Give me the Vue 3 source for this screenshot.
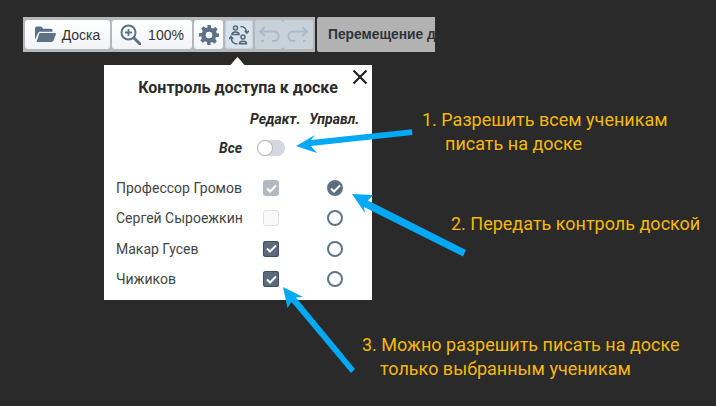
<script setup>
const rows = [
  { name: 'Профессор Громов', edit: 'disabled', owner: true },
  { name: 'Сергей Сыроежкин', edit: 'off', owner: false },
  { name: 'Макар Гусев', edit: 'on', owner: false },
  { name: 'Чижиков', edit: 'on', owner: false },
]
const arrows = [
  'M412 129.300 L311 140 L315 135 L296 146 L317 153 L311 146 L412.500 135 Z',
  'M352 194 L373 195 L368 200.500 L466 250 L463 256.500 L364 207 L365 213 Z',
  'M283 287 L303 297 L296 297.500 L355 369 L351 373 L291.500 302 L287.500 308 Z',
]
</script>

<template>
  <div class="stage">
    <div class="topbar">
      <div class="toolbar">
        <button class="btn board">
          <svg width="21" height="17" viewBox="0 0 21 17"><path fill="#5d7286" d="M0 2.500C0 1.400.8.500 1.800.500h4.400l2 2.200h7.500c1 0 1.800.8 1.800 1.800v1.200H5.200c-1 0-1.800.6-2.200 1.500L0 13.500z"/><path fill="#5d7286" d="M4.500 7h15.200c.9 0 1.400.8 1.100 1.500l-2.400 6.300c-.3.700-.9 1.200-1.700 1.200H1.500z"/></svg>
          <span>Доска</span>
        </button>
        <button class="btn zoom">
          <svg width="21" height="21" viewBox="0 0 21 21" fill="none" stroke="#5d7286"><circle cx="8.500" cy="8.500" r="7" stroke-width="2"/><path d="M14 14l6 6" stroke-width="3" stroke-linecap="round"/><path d="M8.500 5v7M5 8.500h7" stroke-width="1.800"/></svg>
          <span>100%</span>
        </button>
        <button class="btn icon">
          <svg width="20" height="20" viewBox="0 0 24 24"><path fill="#5d7286" fill-rule="evenodd" d="M10 0h4l.6 3.300 2.200.9 2.800-1.900 2.800 2.800-1.900 2.800.9 2.200L24 10v4l-3.600.6-.9 2.200 1.900 2.800-2.800 2.800-2.800-1.900-2.200.9L14 24h-4l-.6-3.600-2.200-.9-2.800 1.900-2.800-2.800 1.900-2.800-.9-2.200L0 14v-4l3.600-.6.900-2.200-1.900-2.800 2.800-2.800 2.800 1.900 2.200-.9zM12 8a4 4 0 1 0 0 8 4 4 0 0 0 0-8z"/></svg>
        </button>
        <button class="btn icon active">
          <svg width="20" height="20" viewBox="0 0 20 20" fill="none" stroke="#51677b" stroke-width="1.500">
            <circle cx="6.500" cy="3" r="2"/>
            <path d="M3 9.500c0-3.200 7-3.200 7 0z"/>
            <circle cx="14" cy="12" r="2"/>
            <path d="M10.500 18.700c0-3.200 7-3.200 7 0z"/>
            <path d="M11.500 1.500c3.600 0 5.800 2 6.300 6M15.700 5.800l2.100 2.400 2-2.500M8.500 19c-3.600 0-6-2.300-6.500-6.500M0 14l2-2.500 2.200 2.500"/>
          </svg>
        </button>
        <button class="btn icon dim">
          <svg width="22" height="17" viewBox="0 0 22 17" fill="none" stroke="#a9bac8" stroke-width="2"><path d="M7 1L2 5.500 7 10M2 5.500h14c6 0 6 9.500 0 9.500h-2M3 15h3" /></svg>
        </button>
        <button class="btn icon dim">
          <svg width="22" height="17" viewBox="0 0 22 17" fill="none" stroke="#a9bac8" stroke-width="2"><path d="M15 1l5 4.500L15 10M20 5.500H6c-6 0-6 9.500 0 9.500h2M16 15h3"/></svg>
        </button>
      </div>
      <div class="mode"><span>Перемещение доски</span></div>
    </div>

    <div class="popup">
      <button class="close">
        <svg width="16" height="16" viewBox="0 0 16 16" stroke="#222" stroke-width="2.200"><path d="M1.500 1.500l13 13M14.500 1.500l-13 13"/></svg>
      </button>
      <h3>Контроль доступа к доске</h3>
      <div class="heads"><i>Редакт.</i><i>Управл.</i></div>
      <div class="all">
        <i>Все</i>
        <span class="switch"><span class="knob"></span></span>
      </div>
      <ul class="list">
        <li v-for="r in rows" :key="r.name">
          <span class="name">{{ r.name }}</span>
          <span class="check" :class="r.edit">
            <svg v-if="r.edit !== 'off'" width="11" height="9" viewBox="0 0 11 9" fill="none" stroke="#fff" stroke-width="2"><path d="M1 4.500l3 3 6-6"/></svg>
          </span>
          <span class="radio" :class="{ on: r.owner }">
            <svg v-if="r.owner" width="11" height="9" viewBox="0 0 11 9" fill="none" stroke="#fff" stroke-width="2"><path d="M1 4.500l3 3 6-6"/></svg>
          </span>
        </li>
      </ul>
    </div>

    <svg class="arrows" width="716" height="406" viewBox="0 0 716 406">
      <path v-for="a in arrows" :key="a" :d="a" fill="#03a9f4"/>
    </svg>

    <p class="note n1">1. Разрешить всем ученикам<br><span>писать на доске</span></p>
    <p class="note n2">2. Передать контроль доской</p>
    <p class="note n3">3. Можно разрешить писать на доске<br><span>только выбранным ученикам</span></p>
  </div>
</template>

<style>
html, body { margin: 0; background: #2a2a2a; }
</style>

<style scoped>
.stage {
  position: relative;
  width: 716px;
  height: 406px;
  overflow: hidden;
  background: #2a2a2a;
  font-family: Roboto, sans-serif;
  padding: 17px 0 0 23px;
  box-sizing: border-box;
}
.topbar { display: flex; gap: 2px; width: 412px; }
.toolbar {
  display: flex;
  gap: 2px;
  padding: 3px 2px;
  background: #b5b7b9;
  height: 35px;
  box-sizing: border-box;
}
.btn {
  height: 29px;
  border: 0;
  padding: 0;
  border-radius: 3px;
  background: linear-gradient(#ffffff, #f1f4f7);
  display: flex;
  align-items: center;
  justify-content: center;
  font: 14px "Liberation Sans", sans-serif;
  color: #333;
}
.board { width: 85px; gap: 6px; }
.zoom { width: 80px; gap: 7px; }
.icon { width: 29px; }
.active { background: #d8e3ec; width: 28px; box-shadow: inset 0 0 0 1px #c4d0da; }
.dim { background: #c9d1d8; width: 28px; }
.dim + .dim { margin-left: -2px; width: 30px; }
.mode {
  flex: 1;
  min-width: 0;
  overflow: hidden;
  white-space: nowrap;
  background: #b2b2b2;
  border-radius: 2px 0 0 2px;
  height: 35px;
  padding-left: 11px;
  font: bold 13.800px/35px "Liberation Sans", sans-serif;
  color: #2f3438;
}
.popup {
  position: absolute;
  left: 104px;
  top: 65px;
  width: 268px;
  height: 235px;
  background: #fff;
  color: #3c3c3c;
}
.popup::before {
  content: "";
  position: absolute;
  left: 121px;
  top: -8px;
  width: 25px;
  height: 9px;
  background: #fff;
  clip-path: path("M0 9C5 9 6 8 8 5L12.500 0 17 5C19 8 20 9 25 9Z");
}
.close {
  position: absolute;
  top: 4px;
  right: 4px;
  border: 0;
  padding: 0;
  background: none;
  display: flex;
}
h3 {
  margin: 0;
  padding-top: 13px;
  text-align: center;
  font-size: 16px;
  line-height: 19px;
  font-weight: 700;
  color: #2c2c2c;
}
.heads {
  display: flex;
  gap: 9px;
  margin-top: 14px;
  padding-left: 146px;
  font-size: 14px;
  font-weight: 700;
  line-height: 16px;
  color: #2c2c2c;
}
.all {
  display: flex;
  align-items: center;
  gap: 15px;
  margin-top: 13px;
  padding-left: 115px;
  font-size: 14px;
  font-weight: 700;
  line-height: 16px;
  color: #2c2c2c;
}
.switch {
  width: 28px;
  height: 16px;
  border-radius: 8px;
  background: #d3d8de;
  position: relative;
}
.knob {
  position: absolute;
  left: 0;
  top: 0;
  width: 14px;
  height: 14px;
  border: 1px solid #b0b4b8;
  border-radius: 50%;
  background: #fff;
}
.list { list-style: none; margin: 17px 0 0; padding: 0 0 0 12px; }
li {
  height: 30.300px;
  display: flex;
  align-items: center;
  font-size: 14px;
  color: #444;
}
.name { width: 147px; white-space: nowrap; }
.check {
  width: 16px;
  height: 16px;
  border-radius: 3px;
  display: flex;
  align-items: center;
  justify-content: center;
  box-sizing: border-box;
}
.check.off { border: 1px solid #dfe2e6; background: #f8f9fb; }
.check.disabled { background: #b1b9c1; }
.check.on { background: #596b7d; box-shadow: inset 0 0 0 1px #3f4f5f; }
.radio {
  margin-left: 48px;
  width: 16px;
  height: 16px;
  border-radius: 50%;
  border: 2px solid #62748a;
  box-sizing: border-box;
  display: flex;
  align-items: center;
  justify-content: center;
  background: #fff;
}
.radio.on { background: #596b7d; }
.radio svg { flex: none; }
.arrows { position: absolute; left: 0; top: 0; pointer-events: none; }
.note {
  position: absolute;
  margin: 0;
  white-space: nowrap;
  color: #f5b90c;
  font-size: 18px;
  line-height: 24px;
}
.n1 { left: 422px; top: 108px; }
.n1 span { margin-left: 23px; }
.n2 { left: 451px; top: 212px; }
.n3 { left: 362px; top: 333px; }
.n3 span { margin-left: 18px; }
</style>
